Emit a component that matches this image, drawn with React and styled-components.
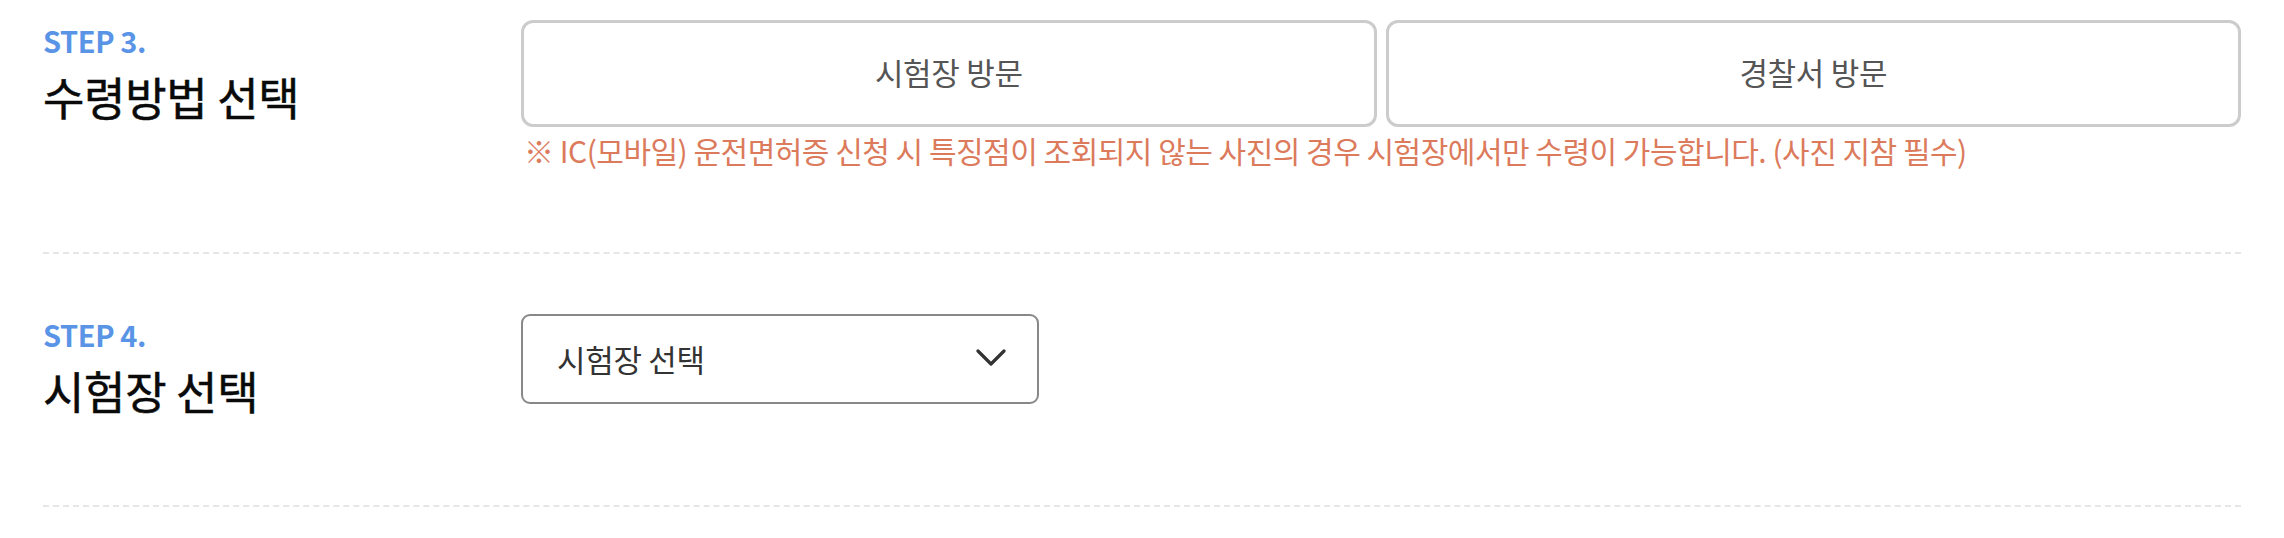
import React from "react";
import styled, { createGlobalStyle } from "styled-components";

const GlobalStyle = createGlobalStyle`
  html, body {
    margin: 0;
    padding: 0;
    background: #ffffff;
  }
  body {
    font-family: "Noto Sans CJK KR", "Noto Sans", sans-serif;
    color: #111;
  }
  * { box-sizing: border-box; }
`;

const Page = styled.div`
  width: 2284px;
  padding: 0 43px 0 43px;
`;

const Section = styled.section`
  display: flex;
  align-items: flex-start;
  padding-top: ${(p) => p.$top}px;
  padding-bottom: ${(p) => p.$bottom}px;
  border-bottom: 2px dashed #e6e6e6;
`;

const LabelCol = styled.div`
  width: 478px;
  flex: none;
  display: flex;
  flex-direction: column;
`;

const StepLabel = styled.div`
  font-size: 29px;
  line-height: 40px;
  font-weight: 700;
  color: #5a94e6;
  letter-spacing: -0.4px;
`;

const Title = styled.h2`
  margin: 7px 0 0 0;
  font-size: 45px;
  line-height: 60px;
  font-weight: 400;
  color: #0a0a0a;
  letter-spacing: -0.3px;
  -webkit-text-stroke: 0.5px #0a0a0a;
`;

const ContentCol = styled.div`
  flex: 1;
  min-width: 0;
  display: flex;
  flex-direction: column;
`;

const ChoiceRow = styled.div`
  display: grid;
  grid-template-columns: 1fr 1fr;
  gap: 9px;
`;

const ChoiceButton = styled.button`
  height: 107px;
  border: 3px solid #cccccc;
  border-radius: 12px;
  background: #fff;
  font-family: "Noto Sans CJK KR", "Noto Sans", sans-serif;
  font-size: 31px;
  font-weight: 400;
  color: #555555;
  letter-spacing: -0.3px;
  display: flex;
  align-items: center;
  justify-content: center;
  padding: 0 0 4px 0;
  cursor: pointer;
`;

const Notice = styled.p`
  margin: 1px 0 0 3px;
  font-size: 30px;
  line-height: 45px;
  color: #dc7a5c;
  letter-spacing: -0.5px;
`;

const Select = styled.div`
  width: 518px;
  height: 90px;
  border: 2px solid #888888;
  border-radius: 9px;
  background: #fff;
  display: flex;
  align-items: center;
  justify-content: space-between;
  padding: 0 31px 2px 34px;
  font-size: 31px;
  color: #333333;
  letter-spacing: -0.3px;
  cursor: pointer;
`;

const Chevron = () => (
  <svg width="30" height="18" viewBox="0 0 30 18" aria-hidden="true">
    <polyline
      points="2,2 15,15 28,2"
      fill="none"
      stroke="#333"
      strokeWidth="3.2"
      strokeLinecap="round"
      strokeLinejoin="round"
    />
  </svg>
);

export default function App() {
  return (
    <>
      <GlobalStyle />
      <Page>
        <Section $top={20} $bottom={79}>
          <LabelCol>
            <StepLabel>STEP 3.</StepLabel>
            <Title>수령방법 선택</Title>
          </LabelCol>
          <ContentCol>
            <ChoiceRow>
              <ChoiceButton type="button">시험장 방문</ChoiceButton>
              <ChoiceButton type="button">경찰서 방문</ChoiceButton>
            </ChoiceRow>
            <Notice>
              ※ IC(모바일) 운전면허증 신청 시 특징점이 조회되지 않는 사진의 경우 시험장에서만 수령이 가능합니다. (사진 지참 필수)
            </Notice>
          </ContentCol>
        </Section>
        <Section $top={60} $bottom={84}>
          <LabelCol>
            <StepLabel>STEP 4.</StepLabel>
            <Title>시험장 선택</Title>
          </LabelCol>
          <ContentCol>
            <Select role="button">
              <span>시험장 선택</span>
              <Chevron />
            </Select>
          </ContentCol>
        </Section>
      </Page>
    </>
  );
}
